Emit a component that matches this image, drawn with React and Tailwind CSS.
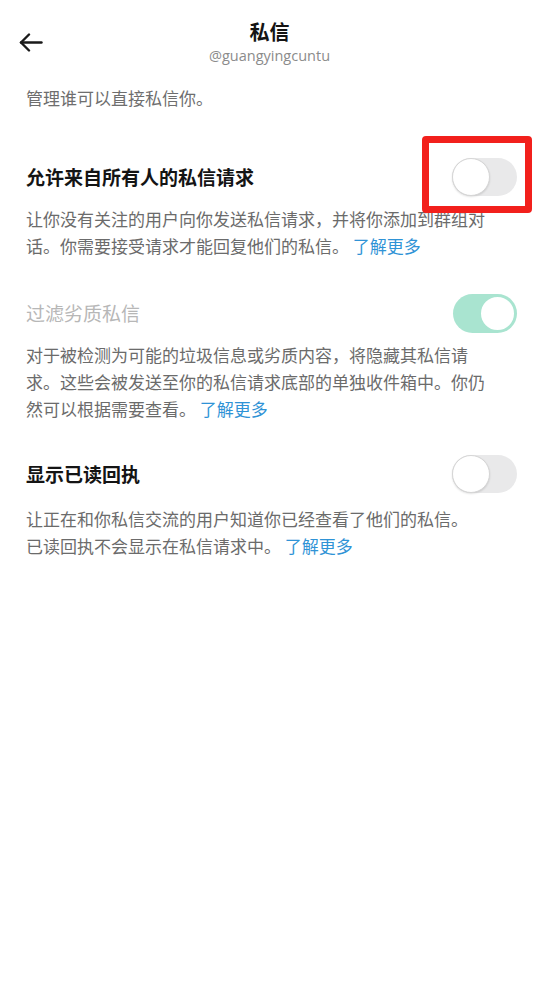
import React from "react";

const font = { fontFamily: '"Noto Sans CJK SC", "Noto Sans", sans-serif' };

function Toggle({ on }) {
  if (on) {
    return (
      <div className="relative h-[39px] w-[64px] rounded-full bg-[#a9e4d0]">
        <div className="absolute right-[1px] top-[1px] h-[37px] w-[37px] rounded-full border-[2px] border-[#a9e4d0] bg-white" />
      </div>
    );
  }
  return (
    <div className="relative h-[38px] w-[65px] rounded-full bg-[#e9e9ea]">
      <div className="absolute left-0 top-0 h-[38px] w-[38px] rounded-full border border-[#d6d6d6] bg-white shadow-[0_1px_2px_rgba(0,0,0,0.12)]" />
    </div>
  );
}

function Link() {
  return <span className="text-[#2f93d6]">了解更多</span>;
}

export default function App() {
  return (
    <div className="min-h-[1006px] w-[539px] bg-white" style={font}>
      <div className="relative flex h-[80px] flex-col items-center pt-[18px]">
        <svg
          className="absolute left-[19px] top-[33px]"
          width="24"
          height="19"
          viewBox="0 0 24 19"
          fill="none"
          stroke="#1a1a1a"
          strokeWidth="2.4"
          strokeLinecap="round"
          strokeLinejoin="round"
        >
          <path d="M22.5 9.5H2" />
          <path d="M10 1.5L2 9.5L10 17.5" />
        </svg>
        <div className="text-[20px] font-bold leading-[28px] text-[#141414]">私信</div>
        <div
          className="text-[14.5px] leading-[20px] text-[#8b8b8b]"
          style={{ fontFamily: '"Open Sans", "Noto Sans", sans-serif' }}
        >
          @guangyingcuntu
        </div>
      </div>

      <div className="px-[26px]">
        <div className="mt-[4px] text-[17px] leading-[27px] text-[#6e6e6e]">
          管理谁可以直接私信你。
        </div>

        <div className="mt-[46px] flex h-[40px] items-center justify-between">
          <div className="text-[19px] font-bold text-[#141414]">允许来自所有人的私信请求</div>
          <div className="relative mr-[-4px]">
            <Toggle />
            <div className="absolute -left-[30px] -top-[22px] -right-[15px] -bottom-[17px] rounded-[4px] border-[7px] border-[#f2201c]" />
          </div>
        </div>
        <div className="mt-[8px] w-[470px] text-[17px] leading-[27px] text-[#6b6b6b]">
          让你没有关注的用户向你发送私信请求，并将你添加到群组对话。你需要接受请求才能回复他们的私信。 <Link />
        </div>

        <div className="mt-[34px] flex h-[40px] items-center justify-between">
          <div className="text-[19px] text-[#b7b7b7]">过滤劣质私信</div>
          <div className="mr-[-4px]">
            <Toggle on />
          </div>
        </div>
        <div className="mt-[8px] w-[470px] text-[17px] leading-[27px] text-[#6b6b6b]">
          对于被检测为可能的垃圾信息或劣质内容，将隐藏其私信请求。这些会被发送至你的私信请求底部的单独收件箱中。你仍然可以根据需要查看。 <Link />
        </div>

        <div className="mt-[32px] flex h-[40px] items-center justify-between">
          <div className="text-[19px] font-bold text-[#141414]">显示已读回执</div>
          <div className="mr-[-4px]">
            <Toggle />
          </div>
        </div>
        <div className="mt-[11px] w-[470px] text-[17px] leading-[27px] text-[#6b6b6b]">
          让正在和你私信交流的用户知道你已经查看了他们的私信。
          <br />
          已读回执不会显示在私信请求中。 <Link />
        </div>
      </div>
    </div>
  );
}
